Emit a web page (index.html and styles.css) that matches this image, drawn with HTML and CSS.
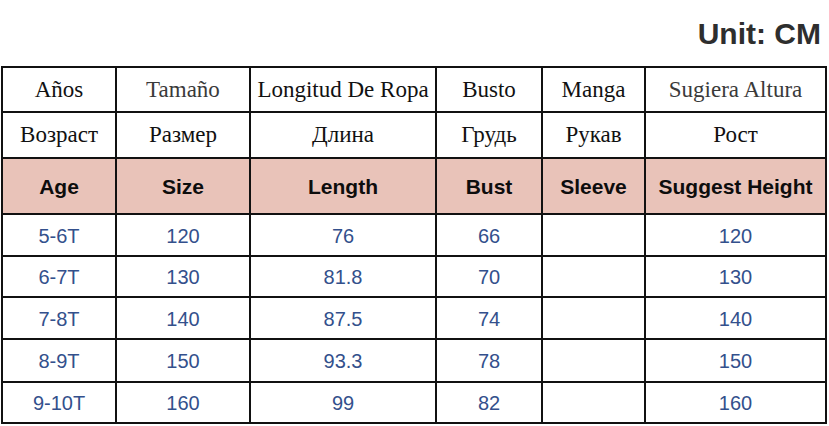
FILE: index.html
```html
<!DOCTYPE html>
<html>
<head>
<meta charset="utf-8">
<link rel="stylesheet" href="styles.css">
</head>
<body>
<div class="unit">Unit: CM</div>
<table class="size-table">
  <colgroup>
    <col class="c1"><col class="c2"><col class="c3"><col class="c4"><col class="c5"><col class="c6">
  </colgroup>
  <tr class="r-es">
    <td>Años</td><td class="gray">Tamaño</td><td>Longitud De Ropa</td><td>Busto</td><td>Manga</td><td class="gray">Sugiera Altura</td>
  </tr>
  <tr class="r-ru">
    <td>Возраст</td><td>Размер</td><td>Длина</td><td>Грудь</td><td>Рукав</td><td>Рост</td>
  </tr>
  <tr class="r-en">
    <td>Age</td><td>Size</td><td>Length</td><td>Bust</td><td>Sleeve</td><td>Suggest Height</td>
  </tr>
  <tr class="r-d h42"><td>5-6T</td><td>120</td><td>76</td><td>66</td><td></td><td>120</td></tr>
  <tr class="r-d h41"><td>6-7T</td><td>130</td><td>81.8</td><td>70</td><td></td><td>130</td></tr>
  <tr class="r-d h42"><td>7-8T</td><td>140</td><td>87.5</td><td>74</td><td></td><td>140</td></tr>
  <tr class="r-d h43"><td>8-9T</td><td>150</td><td>93.3</td><td>78</td><td></td><td>150</td></tr>
  <tr class="r-d h41"><td>9-10T</td><td>160</td><td>99</td><td>82</td><td></td><td>160</td></tr>
</table>
</body>
</html>
```

FILE: styles.css
```css
html, body {
  margin: 0;
  padding: 0;
  background: #fff;
}
body {
  width: 829px;
  height: 426px;
  overflow: hidden;
}
.unit {
  height: 66px;
  box-sizing: border-box;
  padding: 16px 8px 0 0;
  text-align: right;
  font-family: "Liberation Sans", Arial, sans-serif;
  font-weight: bold;
  font-size: 30px;
  line-height: 36px;
  color: #2e2e2e;
}
.size-table {
  margin-left: 1px;
  border-collapse: collapse;
  table-layout: fixed;
  width: 826px;
}
.c1 { width: 114px; }
.c2 { width: 134px; }
.c3 { width: 186px; }
.c4 { width: 106px; }
.c5 { width: 103px; }
.c6 { width: 181px; }
.size-table td {
  border: 2px solid #111;
  padding: 0;
  text-align: center;
  vertical-align: middle;
  white-space: nowrap;
  overflow: hidden;
}
.r-es td, .r-ru td {
  font-family: "Liberation Serif", "Times New Roman", serif;
  font-size: 23px;
  line-height: 26px;
  color: #111;
}
.r-es td { padding-top: 1px; }
.r-es td.gray { color: #3a3a3a; }
.r-es { height: 45px; }
.r-ru { height: 46px; }
.r-en { height: 56px; }
.r-en td {
  background: #e9c3b9;
  font-family: "Liberation Sans", Arial, sans-serif;
  font-weight: bold;
  font-size: 21px;
  line-height: 24px;
  padding-top: 2px;
  color: #0d0d0d;
}
.r-d td {
  font-family: "Liberation Sans", Arial, sans-serif;
  font-size: 20px;
  line-height: 23px;
  padding-top: 2px;
  color: #33508c;
}
.h41 { height: 41px; }
.h42 { height: 42px; }
.h43 { height: 43px; }
```
